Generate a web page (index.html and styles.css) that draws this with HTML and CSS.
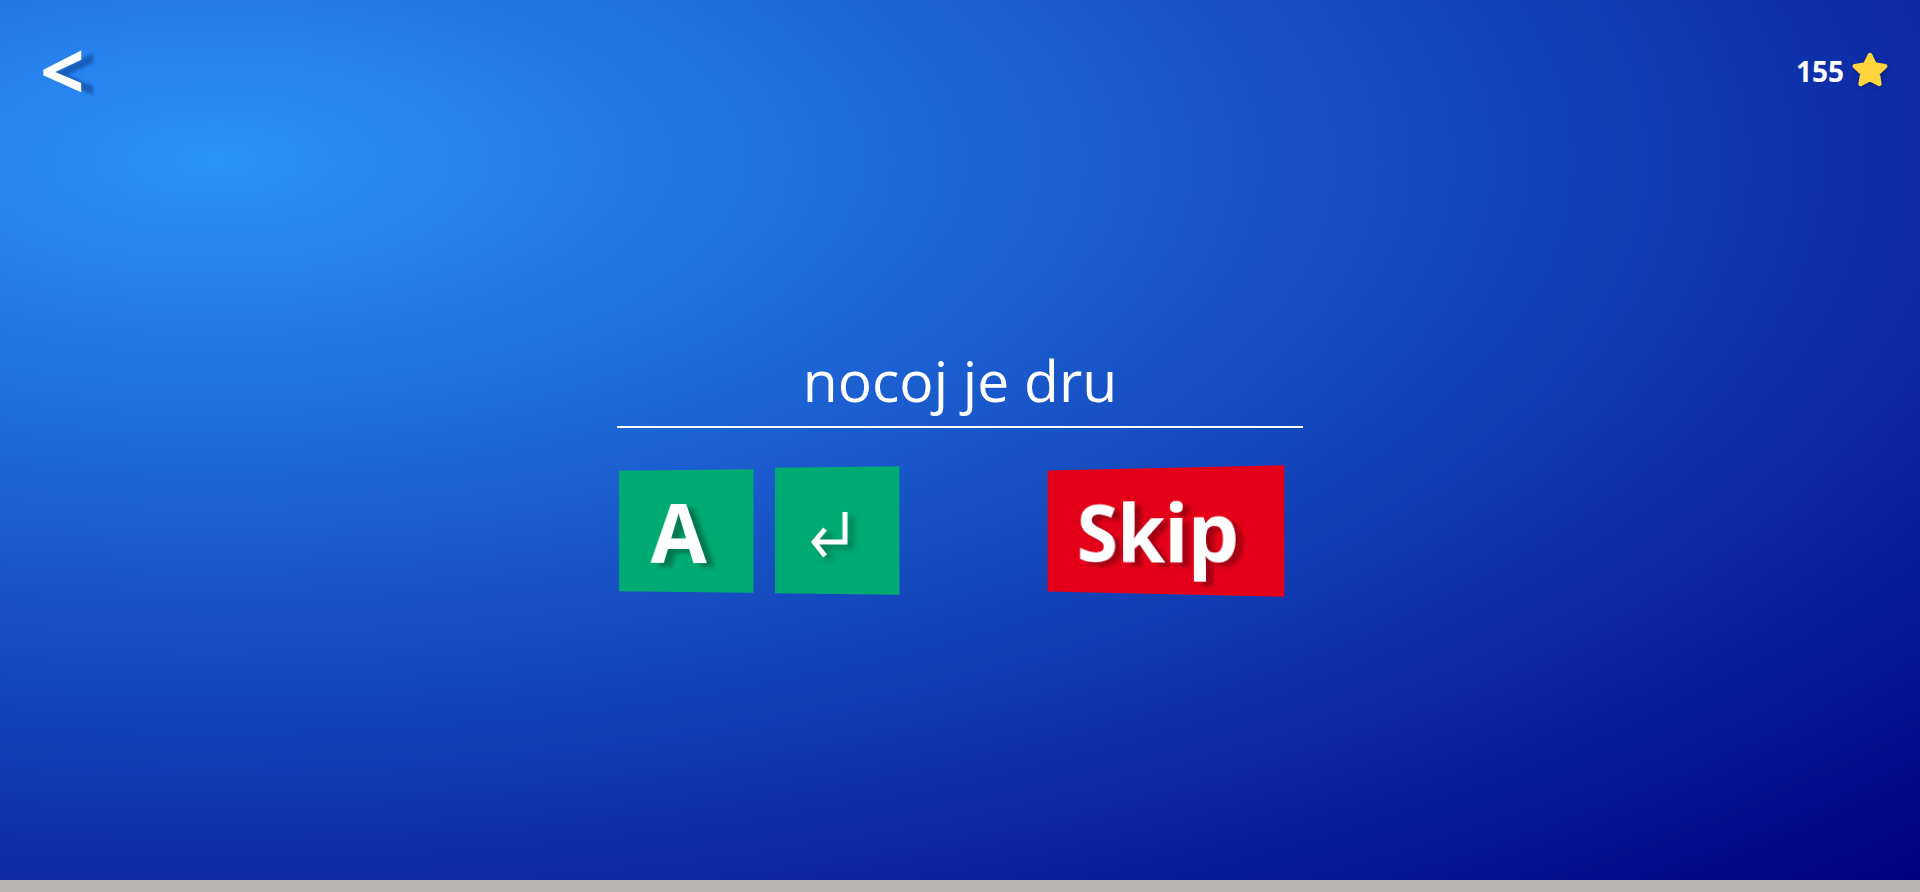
FILE: index.html
```html
<!DOCTYPE html>
<html lang="sl">
<head>
<meta charset="utf-8">
<title>Quiz</title>
<link rel="stylesheet" href="styles.css">
</head>
<body>
<div class="app">
  <main class="stage">
    <header class="topbar">
      <div class="back">&lt;</div>
      <div class="score">
        <span class="score-num">155</span>
        <svg class="star" viewBox="0 0 40 36" width="40" height="36" aria-hidden="true">
          <path d="M20 3 L24.7 12.5 L35.2 14.1 L27.6 21.5 L29.4 31.9 L20 27 L10.6 31.9 L12.4 21.5 L4.8 14.1 L15.3 12.5 Z" fill="#ffd43c" stroke="#ffd43c" stroke-width="4.5" stroke-linejoin="round"/>
        </svg>
      </div>
    </header>
    <section class="quiz">
      <div class="answer">nocoj je dru</div>
      <div class="controls">
        <div class="key key-letter">A</div>
        <div class="key key-enter">
          <svg class="enter-icon" viewBox="0 0 46 56" width="46" height="56" aria-hidden="true">
            <path d="M37 4 V34 H6 M17 21 L6 34 L17 48" fill="none" stroke="#ffffff" stroke-width="5" stroke-linejoin="miter" stroke-linecap="butt"/>
          </svg>
        </div>
        <div class="skip">Skip</div>
      </div>
    </section>
  </main>
  <div class="bottom-bar"></div>
</div>
</body>
</html>
```

FILE: styles.css
```css
html, body {
  margin: 0;
  padding: 0;
}

body {
  width: 1920px;
  height: 892px;
  overflow: hidden;
  font-family: "Open Sans", "Noto Sans", sans-serif;
  color: #ffffff;
}

.app {
  display: flex;
  flex-direction: column;
  height: 892px;
}

.stage {
  height: 880px;
  background: radial-gradient(farthest-corner at 214px 160px, #2a93fc 0%, #000080 100%);
  display: flex;
  flex-direction: column;
}

.topbar {
  display: flex;
  justify-content: space-between;
  align-items: center;
  height: 60px;
  padding: 40px 30px 0 40px;
}

.back {
  font-size: 78px;
  font-weight: 700;
  line-height: 1;
  text-shadow: 12px 3px 3px rgba(0, 20, 90, 0.35);
}

.score {
  display: flex;
  align-items: center;
  gap: 6px;
}

.score-num {
  font-size: 28px;
  font-weight: 700;
  line-height: 1;
  padding-top: 2px;
}

.star {
  display: block;
  filter: drop-shadow(1px 2px 2px rgba(0, 0, 0, 0.25));
}

.quiz {
  width: 686px;
  margin: 0 auto;
}

.answer {
  margin-top: 245px;
  font-size: 57px;
  line-height: 70px;
  text-align: center;
  padding-bottom: 11px;
  border-bottom: 2px solid #ffffff;
}

.controls {
  display: flex;
  align-items: center;
  margin-top: 39px;
  padding-left: 1px;
}

.key {
  display: flex;
  align-items: center;
  justify-content: center;
  background: #00ab73;
}

.key-letter {
  width: 135px;
  height: 122px;
  padding-right: 14px;
  box-sizing: border-box;
  font-size: 82px;
  font-weight: 700;
  line-height: 1;
  text-shadow: 8px 4px 4px rgba(0, 0, 0, 0.3);
  transform: perspective(500px) rotateY(-5deg);
}

.key-enter {
  width: 125px;
  height: 127px;
  margin-left: 21px;
  padding: 10px 12px 0 0;
  box-sizing: border-box;
  transform: perspective(500px) rotateY(-5deg);
}

.enter-icon {
  display: block;
  filter: drop-shadow(6px 4px 3px rgba(0, 0, 0, 0.3));
}

.skip {
  width: 240px;
  height: 126px;
  margin-left: 142px;
  padding-right: 12px;
  box-sizing: border-box;
  background: #e50019;
  display: flex;
  align-items: center;
  justify-content: center;
  font-size: 80px;
  font-weight: 700;
  line-height: 1;
  letter-spacing: -1px;
  text-shadow: 7px 4px 4px rgba(0, 0, 0, 0.3);
  transform: perspective(500px) rotateY(-10deg);
}

.bottom-bar {
  height: 12px;
  background: #b9b6b5;
}
```
